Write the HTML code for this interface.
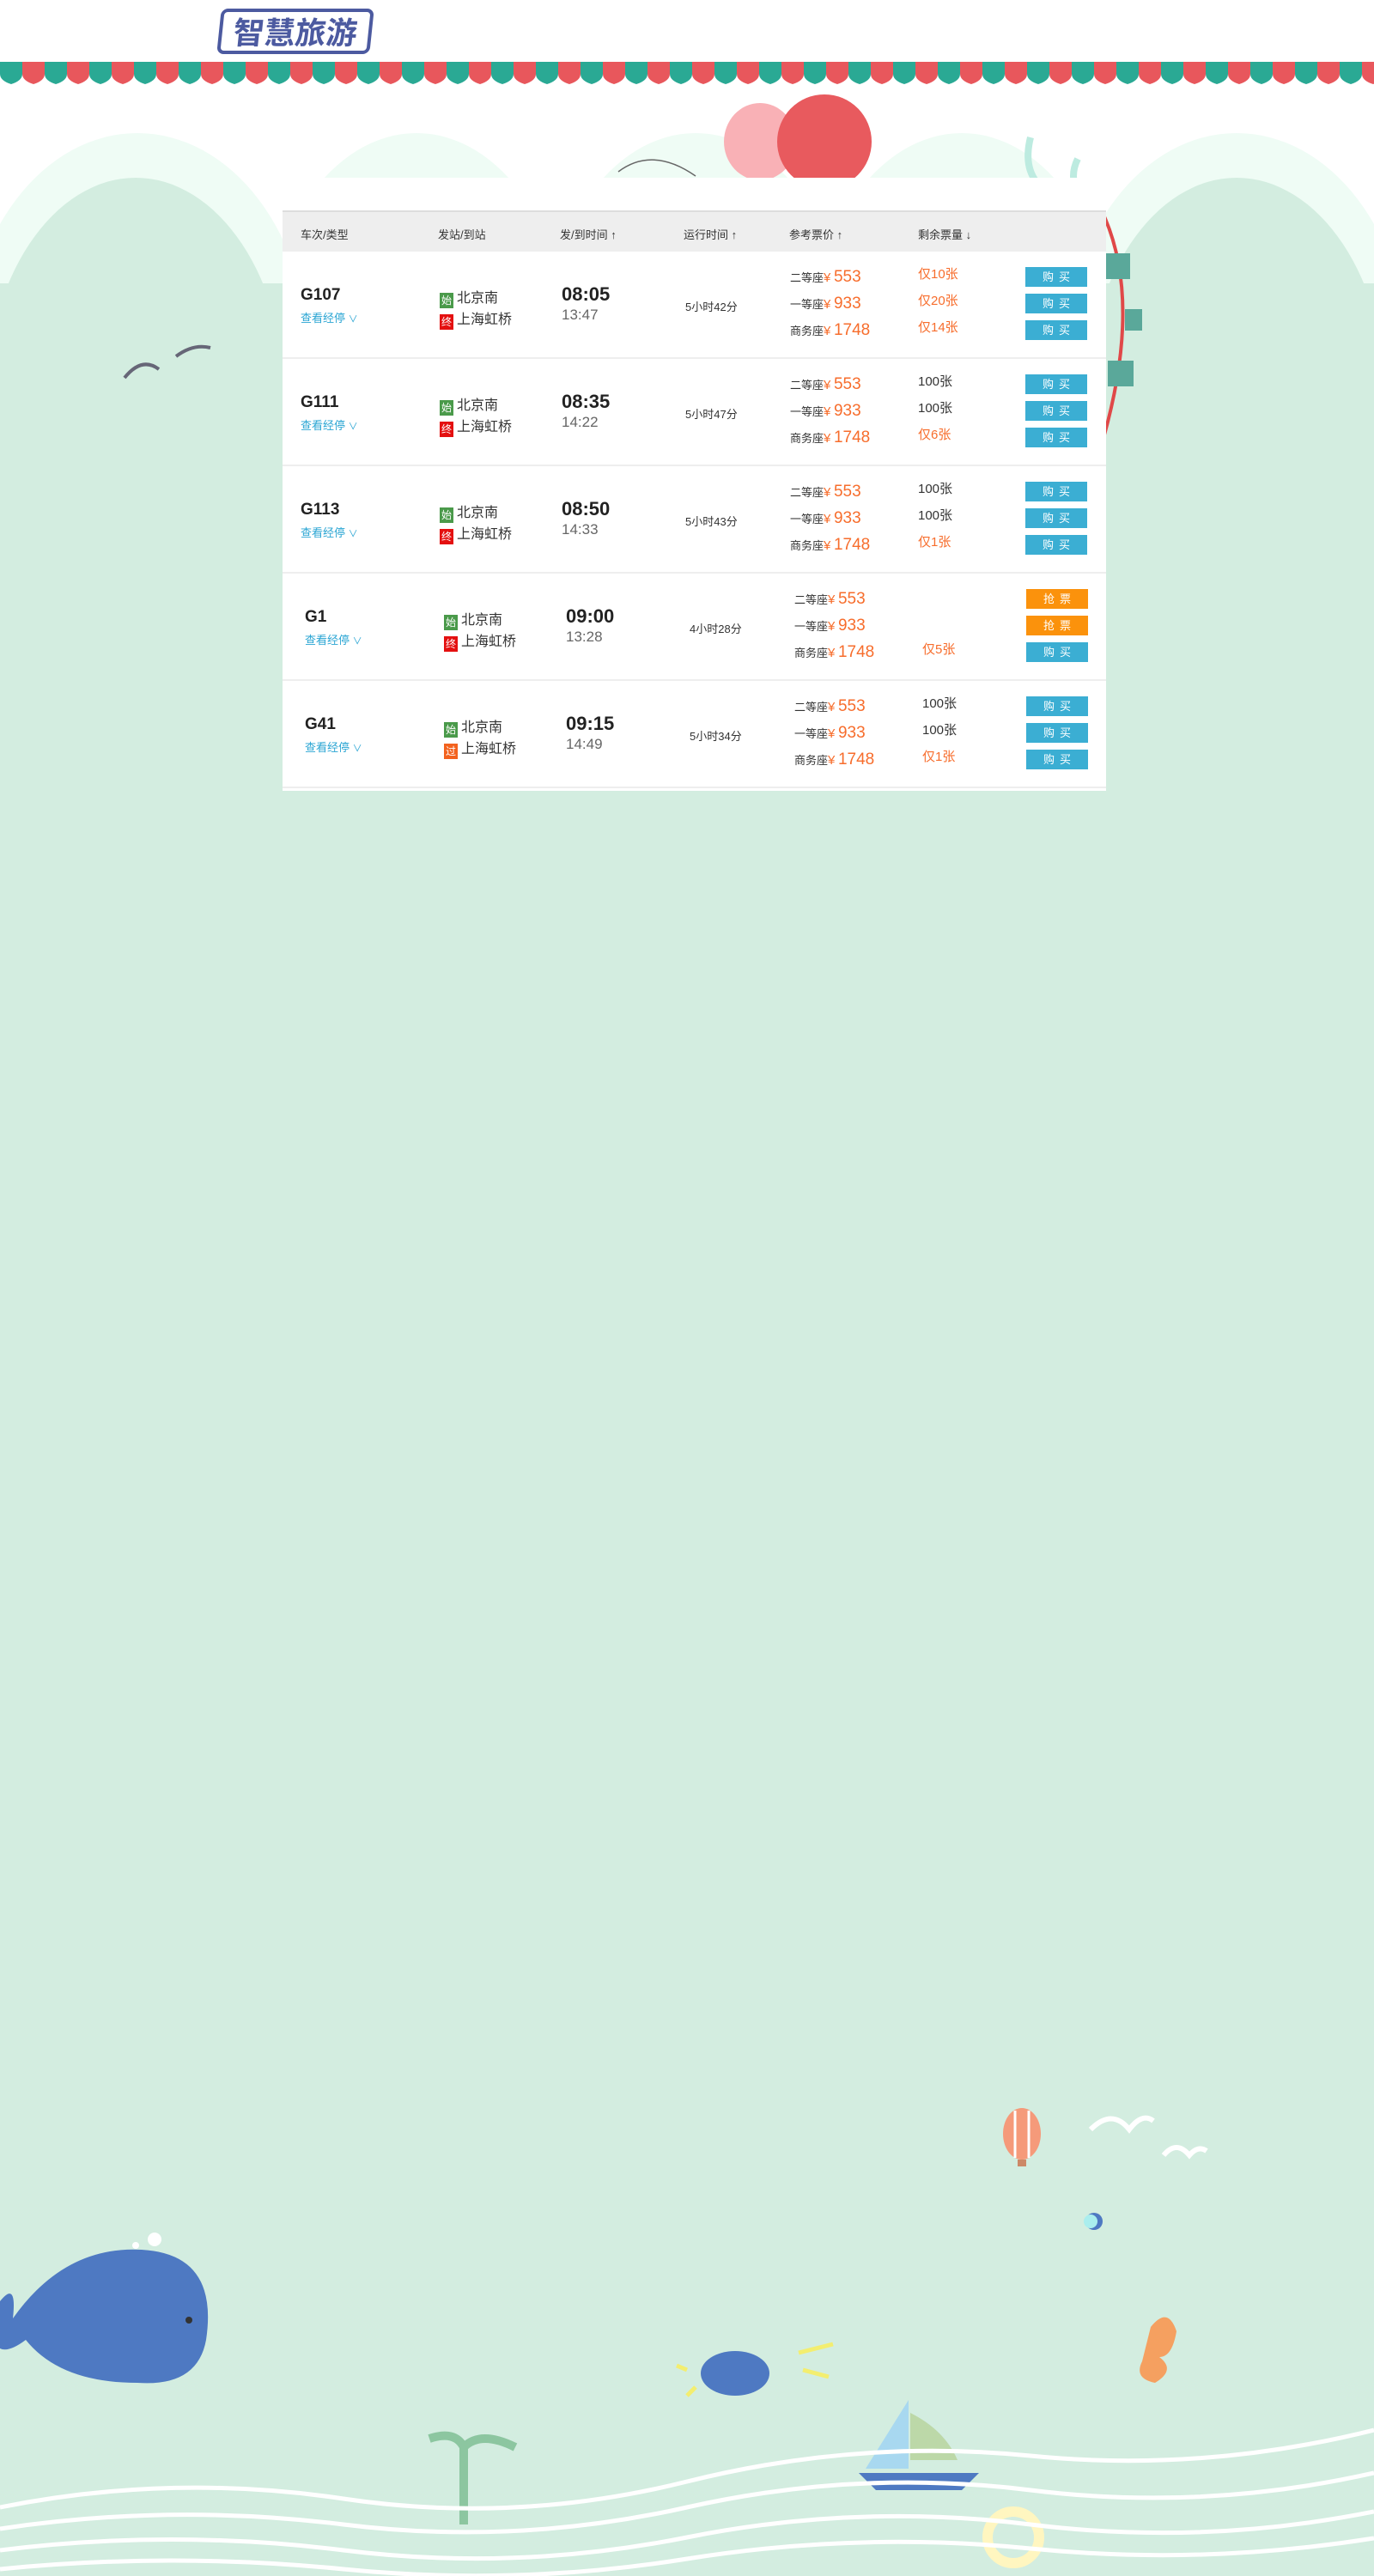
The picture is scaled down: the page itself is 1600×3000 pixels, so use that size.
<!DOCTYPE html>
<html><head><meta charset="utf-8"><style>
*{margin:0;padding:0;box-sizing:border-box}
body{width:1600px;height:3000px;position:relative;overflow:hidden;background:#d3ede0;font-family:"Liberation Sans","Noto Sans CJK SC",sans-serif;color:#333}
.a{position:absolute}
.card{left:329px;top:207px;width:959px;height:714px;background:#fff}
.hdr{left:0;top:38px;width:959px;height:48px;background:#eeeeee;border-top:2px solid #ddd;font-size:13px;color:#333}
.hdr span{position:absolute;top:16px}
.row{left:0;width:959px;height:125px;border-bottom:2px solid #eee}
.tn{font-size:19px;font-weight:bold;color:#222}
.jt{font-size:13px;color:#2aa5d3}
.st{font-size:16px;color:#333}
.tag{display:inline-block;width:16px;height:18px;color:#fff;font-size:12px;text-align:center;line-height:18px;margin-right:4px;vertical-align:-2px}
.t1{font-size:22px;font-weight:bold;color:#222}
.t2{font-size:17px;color:#666}
.du{font-size:13px;color:#333}
.pl{font-size:13px;color:#333}
.pl b{font-weight:normal;color:#f76d2c;font-size:19px}
.pl i{font-style:normal;color:#f76d2c;font-size:15px}
.rm{font-size:15px;color:#f76d2c}
.rm.k{color:#333}
.btn{width:72px;height:23px;background:#3baed3;color:#fff;font-size:13px;text-align:center;line-height:23px;letter-spacing:6px;text-indent:6px}
.btn.o{background:#fb920c}
</style></head><body>
<div class="a" style="left:0;top:0;width:1600px;height:330px;background:#fff"></div>
<svg class="a" style="left:0;top:0" width="1600" height="420">
<g fill="#effcf5">
<ellipse cx="160" cy="420" rx="200" ry="265"/><ellipse cx="485" cy="420" rx="180" ry="265"/><ellipse cx="810" cy="420" rx="180" ry="265"/><ellipse cx="1120" cy="420" rx="180" ry="265"/><ellipse cx="1440" cy="420" rx="200" ry="265"/></g>
<g fill="#d3ede0"><ellipse cx="158" cy="470" rx="175" ry="263"/><ellipse cx="1440" cy="470" rx="175" ry="263"/><rect x="0" y="330" width="1600" height="90"/></g>
<ellipse cx="885" cy="165" rx="42" ry="45" fill="#f9b1b6"/>
<ellipse cx="960" cy="165" rx="55" ry="55" fill="#e85a5e"/>
<path d="M720 200 q40 -30 90 5" stroke="#666" fill="none" stroke-width="1.5"/>
<path d="M1200 160 q-10 40 15 60 M1255 185 q-10 20 0 40" stroke="#bdebe0" stroke-width="8" fill="none"/>
</svg>
<svg class="a" style="left:0;top:72px" width="1600" height="26">
<defs><pattern id="p" width="52" height="26" patternUnits="userSpaceOnUse">
<path d="M0 0h26v14q0 8-13 12q-13-4-13-12z" fill="#2aa994"/><path d="M26 0h26v14q0 8-13 12q-13-4-13-12z" fill="#e8575c"/></pattern></defs>
<rect width="1600" height="26" fill="url(#p)"/></svg>
<div class="a" style="left:255px;top:10px;width:178px;height:53px;border:4px solid #4c5aa0;border-radius:8px;transform:skewX(-6deg);color:#4c5aa0;font-size:36px;font-weight:bold;line-height:44px;text-align:center;font-family:'Noto Sans CJK SC',sans-serif">智慧旅游</div>
<svg class="a" style="left:1280px;top:250px" width="60" height="280"><path d="M5 0 q45 100 0 260" stroke="#e04848" stroke-width="4" fill="none"/><g fill="#5aa89a"><rect x="6" y="45" width="30" height="30"/><rect x="30" y="110" width="20" height="25"/><rect x="10" y="170" width="30" height="30"/></g></svg>
<svg class="a" style="left:140px;top:390px" width="110" height="60"><path d="M5 50 q20 -25 40 -10 M65 25 q20-15 40 -10" stroke="#667" stroke-width="4" fill="none"/></svg>

<div class="a card">
<div class="a hdr"><span style="left:21px">车次/类型</span><span style="left:181px">发站/到站</span><span style="left:323px">发/到时间 ↑</span><span style="left:467px">运行时间 ↑</span><span style="left:590px">参考票价 ↑</span><span style="left:740px">剩余票量 ↓</span></div>
</div>
<div id="rows"></div>
<script>
var d=[["G107","终","#e41010","08:05","13:47","5小时42分",["仅10张","仅20张","仅14张"],0,0],
["G111","终","#e41010","08:35","14:22","5小时47分",["100张","100张","仅6张"],0,0],
["G113","终","#e41010","08:50","14:33","5小时43分",["100张","100张","仅1张"],0,0],
["G1","终","#e41010","09:00","13:28","4小时28分",["","","仅5张"],5,1],
["G41","过","#f3621e","09:15","14:49","5小时34分",["100张","100张","仅1张"],5,0]];
var h="";
d.forEach(function(r,i){var top=293+i*125,s=r[7],L=329+s;
h+='<div class="a row" style="left:329px;top:'+top+'px;border-bottom:2px solid #eee"></div>';
h+='<div class="a tn" style="left:'+(L+21)+'px;top:'+(top+40)+'px">'+r[0]+'</div>';
h+='<div class="a jt" style="left:'+(L+21)+'px;top:'+(top+67)+'px">查看经停 <span style="font-size:11px">&#8744;</span></div>';
h+='<div class="a st" style="left:'+(L+183)+'px;top:'+(top+40)+'px"><span class="tag" style="background:#4a9a4a">始</span>北京南</div>';
h+='<div class="a st" style="left:'+(L+183)+'px;top:'+(top+65)+'px"><span class="tag" style="background:'+r[2]+'">'+r[1]+'</span>上海虹桥</div>';
h+='<div class="a t1" style="left:'+(L+325)+'px;top:'+(top+37)+'px">'+r[3]+'</div>';
h+='<div class="a t2" style="left:'+(L+325)+'px;top:'+(top+64)+'px">'+r[4]+'</div>';
h+='<div class="a du" style="left:'+(L+469)+'px;top:'+(top+54)+'px">'+r[5]+'</div>';
var lab=["二等座","一等座","商务座"],pr=["553","933","1748"];
for(var k=0;k<3;k++){var y=top+19+k*31;
h+='<div class="a pl" style="left:'+(L+591)+'px;top:'+y+'px">'+lab[k]+'<i>¥</i> <b>'+pr[k]+'</b></div>';
var rm=r[6][k];h+='<div class="a rm'+(rm.charAt(0)=="仅"?"":" k")+'" style="left:'+(L+740)+'px;top:'+(y-4)+'px">'+rm+'</div>';
var o=(r[8]&&k<2);h+='<div class="a btn'+(o?" o":"")+'" style="left:'+(1194+(s?1:0))+'px;top:'+(y-1)+'px">'+(o?"抢票":"购买")+'</div>';}
});
document.getElementById("rows").innerHTML=h;
</script>
<svg class="a" style="left:0;top:2440px" width="1600" height="560">
<ellipse cx="1190" cy="45" rx="22" ry="30" fill="#f59a7a"/><path d="M1182 18v55M1198 18v55" stroke="#fff" stroke-width="3"/><rect x="1185" y="75" width="10" height="8" fill="#c86"/>
<path d="M1270 40 q25-25 45 0 q15-20 28-10 M1355 70 q15-18 30 0 q10-12 20-5" stroke="#fff" stroke-width="6" fill="none"/>
<circle cx="1274" cy="147" r="10" fill="#4e79c2"/><circle cx="1270" cy="147" r="8" fill="#aee"/>
<path d="M0 240 q20 -25 15 20 q60-85 150-80 q90 5 75 105 q-10 55-80 50 q-90 0-130-50 q-20 15 -30 10z" fill="#4e79c2"/>
<circle cx="180" cy="168" r="8" fill="#fff"/><circle cx="158" cy="175" r="4" fill="#fff"/><circle cx="220" cy="262" r="4" fill="#333"/>
<ellipse cx="856" cy="324" rx="40" ry="26" fill="#4e79c2"/>
<path d="M800 320 l-12-5 M810 340 l-10 10 M930 300 l40 -10 M935 320 l30 8" stroke="#f3ee70" stroke-width="5"/>
<path d="M1340 270 q20-25 30 5 q-5 30-20 30 q20 15-5 30 q-25-5-15-25z" fill="#f5a060"/>
<path d="M1058 355 v80 l-50 0z" fill="#a8d8f0"/><path d="M1060 370 q40 20 55 55 h-55z" fill="#bcd8a8"/><path d="M1000 440 h140 l-20 20 h-100z" fill="#4e79c2"/>
<path d="M540 500 v-90 q-10-20-40-10 M540 410 q20-20 60 0" stroke="#8cc6a0" stroke-width="10" fill="none"/>
<circle cx="1180" cy="515" r="30" fill="none" stroke="#fff6c0" stroke-width="12"/>
<g stroke="#fff" stroke-width="5" fill="none">
<path d="M0 480 q200 -40 400 -10 t400 -20 t400 -30 t400 -30"/>
<path d="M0 505 q200 -30 400 -5 t400 -20 t400 -20 t400 -20"/>
<path d="M0 530 q200 -25 400 0 t400 -15 t400 -15 t400 -15"/>
<path d="M0 552 q200 -20 400 0 t400 -12 t400 -12 t400 -12"/>
</g></svg>
</body></html>
